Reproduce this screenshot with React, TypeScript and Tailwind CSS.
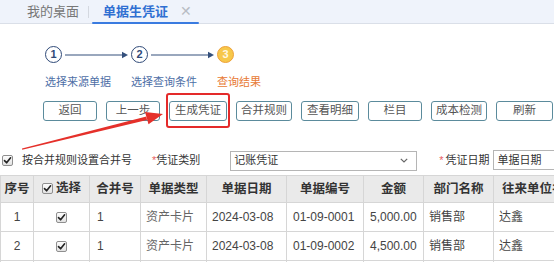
import React from "react";

const Check = () => (
  <span className="inline-flex shrink-0 items-center justify-center w-[11px] h-[11px] border border-[#8f8f8f] rounded-[2px] bg-gradient-to-b from-[#fdfdfd] to-[#e2e2e2] align-middle">
    <svg width="9" height="9" viewBox="0 0 9 9">
      <path d="M1.5 4.6 L3.6 6.8 L7.6 1.8" fill="none" stroke="#222" strokeWidth="1.6" strokeLinecap="round" strokeLinejoin="round" />
    </svg>
  </span>
);

const Arrow = () => (
  <svg width="63" height="8" viewBox="0 0 63 8" className="ml-[3px]">
    <line x1="0" y1="4" x2="58" y2="4" stroke="#34507c" strokeWidth="1.2" />
    <polygon points="57,0.8 63,4 57,7.2" fill="#34507c" />
  </svg>
);

const steps = [
  { n: "1", label: "选择来源单据", active: false },
  { n: "2", label: "选择查询条件", active: false },
  { n: "3", label: "查询结果", active: true },
];

const buttons: { t: string; w: string }[] = [
  { t: "返回", w: "w-[54px]" },
  { t: "上一步", w: "w-[54px]" },
  { t: "生成凭证", w: "w-[58px]" },
  { t: "合并规则", w: "w-[56px]" },
  { t: "查看明细", w: "w-[58px]" },
  { t: "栏目", w: "w-[54px]" },
  { t: "成本检测", w: "w-[56px]" },
  { t: "刷新", w: "w-[57px]" },
];

const rows = [
  { no: "1", merge: "1", type: "资产卡片", date: "2024-03-08", code: "01-09-0001", amt: "5,000.00", dept: "销售部", unit: "达鑫" },
  { no: "2", merge: "1", type: "资产卡片", date: "2024-03-08", code: "01-09-0002", amt: "4,500.00", dept: "销售部", unit: "达鑫" },
];

export default function App() {
  return (
    <div
      className="relative w-[554px] h-[262px] overflow-hidden bg-white text-[#333]"
      style={{ fontFamily: '"Liberation Sans", "Noto Sans CJK SC", sans-serif' }}
    >
      {/* Tab bar */}
      <div className="h-[24px] bg-[#eff3fb] border-b border-[#dadfe8] flex items-stretch">
        <div className="pl-[27px] pr-[9px] flex items-center text-[13px] text-[#777]">我的桌面</div>
        <div className="w-px h-[12px] self-center bg-[#d4d8e0]"></div>
        <div className="ml-[3px] w-[107px] relative flex items-center pl-[11px] text-[13px] font-bold text-[#2f6fd2]">
          <span>单据生凭证</span>
          <span className="ml-[12px] text-[#b8bcc4] font-normal text-[14px]">✕</span>
          <div className="absolute left-0 right-0 bottom-[-1px] h-[2px] bg-[#3a7be0] rounded-full"></div>
        </div>
      </div>

      {/* Steps */}
      <div className="flex pl-[45px] pt-[22px]">
        {steps.map((s, i) => (
          <div key={s.n} className="w-[86px] flex flex-col">
            <div className="flex items-center h-[17px]">
              {s.active ? (
                <div className="w-[17px] h-[17px] rounded-full bg-[#f7c84a] border-[1.5px] border-[#eea13a] flex items-center justify-center text-[11px] text-[#fff8e0] font-bold leading-none">
                  {s.n}
                </div>
              ) : (
                <div className="w-[17px] h-[17px] rounded-full bg-white border-[1.5px] border-[#2f4a78] flex items-center justify-center text-[11px] text-[#2f4a78] font-bold leading-none">
                  {s.n}
                </div>
              )}
              {i < 2 && <Arrow />}
            </div>
            <div className={`mt-[12px] text-[11px] leading-[14px] whitespace-nowrap ${s.active ? "text-[#e87a35]" : "text-[#4d6ea6]"}`}>
              {s.label}
            </div>
          </div>
        ))}
      </div>

      {/* Buttons */}
      <div className="flex gap-[9px] pl-[43px] mt-[12px]">
        {buttons.map((b) => (
          <div key={b.t} className="relative">
            <div className={`${b.w} h-[20px] border border-[#5b8b9c] rounded-[3px] bg-white flex items-center justify-center text-[11.5px] text-[#555]`}>
              {b.t}
            </div>
            {b.t === "生成凭证" && (
              <div className="absolute left-[-3px] right-[-3px] top-[-8px] bottom-[-7px] border-2 border-[#e42a2a] rounded-[3px]"></div>
            )}
          </div>
        ))}
      </div>

      {/* Filter row */}
      <div className="flex flex-nowrap items-center h-[21px] mt-[29px] text-[11px] text-[#333] whitespace-nowrap">
        <div className="ml-[2px] shrink-0 flex"><Check /></div>
        <span className="ml-[9px] shrink-0">按合并规则设置合并号</span>
        <span className="ml-[20px] shrink-0 text-[#e86060]">*</span>
        <span className="shrink-0">凭证类别</span>
        <div className="ml-[30px] shrink-0 w-[187px] h-[20px] border border-[#b5b5b5] bg-white flex items-center justify-between pl-[3px] pr-[8px]">
          <span>记账凭证</span>
          <svg width="8" height="5" viewBox="0 0 8 5">
            <path d="M0.8 0.8 L4 4 L7.2 0.8" fill="none" stroke="#666" strokeWidth="1.2" />
          </svg>
        </div>
        <span className="ml-[22px] shrink-0 text-[#e86060]">*</span>
        <span className="ml-[2px] shrink-0">凭证日期</span>
        <div className="ml-[3px] shrink-0 w-[80px] h-[20px] border border-[#b5b5b5] bg-white flex items-center pl-[4px] -mt-[1px]">
          单据日期
        </div>
      </div>

      {/* Table */}
      <div className="mt-[4px] w-[554px] overflow-hidden">
        <table className="table-fixed border-collapse w-[585px] text-[12px]">
          <colgroup>
            <col className="w-[33px]" />
            <col className="w-[56px]" />
            <col className="w-[51px]" />
            <col className="w-[66px]" />
            <col className="w-[80px]" />
            <col className="w-[77px]" />
            <col className="w-[60px]" />
            <col className="w-[70px]" />
            <col className="w-[92px]" />
          </colgroup>
          <thead>
            <tr className="h-[27px] bg-[#eaeaea] text-[#333] font-bold text-[12.5px]">
              <th className="border border-[#d6d6d6] p-0 font-bold text-center">序号</th>
              <th className="border border-[#d6d6d6] p-0 font-bold text-center">
                <span className="inline-flex items-center gap-[3px]"><Check />选择</span>
              </th>
              <th className="border border-[#d6d6d6] p-0 font-bold text-center">合并号</th>
              <th className="border border-[#d6d6d6] p-0 font-bold text-center">单据类型</th>
              <th className="border border-[#d6d6d6] p-0 font-bold text-center">单据日期</th>
              <th className="border border-[#d6d6d6] p-0 font-bold text-center">单据编号</th>
              <th className="border border-[#d6d6d6] p-0 font-bold text-center">金额</th>
              <th className="border border-[#d6d6d6] p-0 font-bold text-center">部门名称</th>
              <th className="border border-[#d6d6d6] p-0 font-bold text-center whitespace-nowrap overflow-hidden">往来单位名称</th>
            </tr>
          </thead>
          <tbody className="text-[#444]">
            {rows.map((r) => (
              <tr key={r.no} className="h-[29px] bg-white">
                <td className="border border-[#d6d6d6] p-0 text-center">{r.no}</td>
                <td className="border border-[#d6d6d6] p-0 text-center"><Check /></td>
                <td className="border border-[#d6d6d6] p-0 pl-[7px]">{r.merge}</td>
                <td className="border border-[#d6d6d6] p-0 pl-[5px] text-[#666]">{r.type}</td>
                <td className="border border-[#d6d6d6] p-0 pl-[5px]">{r.date}</td>
                <td className="border border-[#d6d6d6] p-0 pl-[6px]">{r.code}</td>
                <td className="border border-[#d6d6d6] p-0 pl-[6px]">{r.amt}</td>
                <td className="border border-[#d6d6d6] p-0 pl-[5px]">{r.dept}</td>
                <td className="border border-[#d6d6d6] p-0 pl-[5px]">{r.unit}</td>
              </tr>
            ))}
            <tr className="h-[29px] bg-white">
              {Array.from({ length: 9 }).map((_, i) => (
                <td key={i} className="border border-[#d6d6d6] p-0"></td>
              ))}
            </tr>
          </tbody>
        </table>
      </div>

      {/* Red annotation arrow */}
      <svg className="absolute left-0 top-0 pointer-events-none" width="554" height="262" viewBox="0 0 554 262">
        <polygon points="22,148.4 22.2,149.8 147,120 146.3,116.4" fill="#e5302a" />
        <polygon points="163,114 145,112 148.5,124.2" fill="#e5302a" />
      </svg>
    </div>
  );
}
